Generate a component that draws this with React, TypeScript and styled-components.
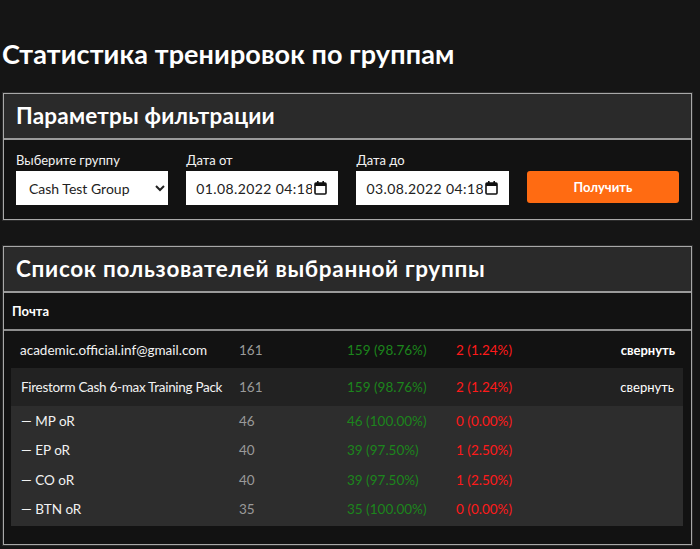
import React from 'react';
import styled, { createGlobalStyle } from 'styled-components';

const GlobalStyle = createGlobalStyle`
  html, body {
    margin: 0;
    padding: 0;
    background: #151515;
  }
  body {
    font-family: Lato, "Noto Sans", "Liberation Sans", sans-serif;
    color: #f2f2f2;
  }
  * { box-sizing: border-box; }
`;

const Page = styled.div`
  padding: 0 8px 0 2px;
`;

const Title = styled.h1`
  margin: 38px 0 24px;
  font-size: 27px;
  line-height: 31px;
  font-weight: 700;
  letter-spacing: 0.1px;
  color: #fff;
`;

const Card = styled.section`
  margin: 0 0 26px 1px;
  border: 1px solid #a8a8a8;
  box-shadow: 0 0 0 1px #2c2c2c;
  background: #121212;
`;

const CardHeader = styled.div`
  background: #2a2a2a;
  padding: 10px 12px;
  border-bottom: 2px solid #9a9a9a;
`;

const CardTitle = styled.h2<{ $wide?: boolean }>`
  margin: 0;
  font-size: 22.5px;
  line-height: 24px;
  font-weight: 700;
  letter-spacing: ${p => (p.$wide ? '0.7px' : '0.2px')};
  color: #fff;
`;

const FilterBody = styled.div`
  display: flex;
  align-items: flex-end;
  gap: 18px;
  padding: 12px 12px 14px;
`;

const Field = styled.label`
  display: flex;
  flex-direction: column;
  gap: 3px;
  width: 153px;
  font-size: 13px;
  line-height: 16px;
  color: #f2f2f2;
`;

const Select = styled.select`
  height: 34px;
  width: 100%;
  border: none;
  border-radius: 0;
  background: #fff;
  color: #222;
  font-family: inherit;
  font-size: 14px;
  padding: 0 6px 0 9px;
`;

const DateBox = styled.div`
  position: relative;
  height: 34px;
  background: #fff;
`;

const DateInput = styled.input`
  width: 100%;
  height: 100%;
  border: none;
  outline: none;
  background: transparent;
  color: #222;
  font-family: inherit;
  font-size: 14px;
  letter-spacing: 0.4px;
  padding: 0 26px 0 10px;
`;

const CalendarIcon = styled.svg`
  position: absolute;
  right: 11px;
  top: 10px;
  width: 13px;
  height: 14px;
  pointer-events: none;
`;

const SubmitButton = styled.button`
  width: 153px;
  height: 32px;
  margin-bottom: 2px;
  border: none;
  border-radius: 3px;
  background: #ff6b12;
  color: #fff;
  font-family: inherit;
  font-size: 13px;
  font-weight: 700;
  cursor: pointer;
`;

const TableHead = styled.div`
  padding: 0 8px;
  height: 38px;
  display: flex;
  align-items: center;
  font-size: 13px;
  font-weight: 700;
  color: #fff;
  border-bottom: 2px solid #8e8e8e;
`;

const UserRow = styled.div`
  display: grid;
  grid-template-columns: 219px 108px 109px 1fr auto;
  align-items: center;
  height: 37px;
  padding: 0 16px;
  font-size: 13.5px;
`;

const Nested = styled.div`
  margin: 0 8px 0 7px;
  background: #2d2d2d;
  padding-bottom: 2px;
`;

const PackRow = styled.div<{ $head?: boolean }>`
  display: grid;
  grid-template-columns: 218px 108px 109px 1fr auto;
  align-items: center;
  height: ${p => (p.$head ? '38px' : '29.5px')};
  padding: 0 9px 0 10px;
  font-size: 13.5px;
  background: ${p => (p.$head ? '#222' : 'transparent')};
`;

const Name = styled.span<{ $tight?: boolean }>`
  color: #f2f2f2;
  white-space: nowrap;
  letter-spacing: ${p => (p.$tight ? '-0.3px' : '0')};
`;

const Count = styled.span`
  color: #9a9a9a;
`;

const Ok = styled.span`
  color: #1c851c;
`;

const Bad = styled.span`
  color: #ff1a1a;
`;

const Toggle = styled.span<{ $bold?: boolean }>`
  color: #fff;
  font-size: 13px;
  font-weight: ${p => (p.$bold ? 700 : 400)};
  cursor: pointer;
`;

const Calendar = () => (
  <CalendarIcon viewBox="0 0 13 14">
    <rect x="1" y="2" width="11" height="11" rx="1" fill="none" stroke="#111" strokeWidth="1.6" />
    <rect x="1" y="2" width="11" height="3" fill="#111" />
    <rect x="3" y="0" width="1.6" height="3" fill="#111" />
    <rect x="8.4" y="0" width="1.6" height="3" fill="#111" />
  </CalendarIcon>
);

const positions = [
  { name: '— MP oR', total: 46, ok: '46 (100.00%)', bad: '0 (0.00%)' },
  { name: '— EP oR', total: 40, ok: '39 (97.50%)', bad: '1 (2.50%)' },
  { name: '— CO oR', total: 40, ok: '39 (97.50%)', bad: '1 (2.50%)' },
  { name: '— BTN oR', total: 35, ok: '35 (100.00%)', bad: '0 (0.00%)' },
];

export default function App() {
  return (
    <Page>
      <GlobalStyle />
      <Title>Статистика тренировок по группам</Title>

      <Card>
        <CardHeader>
          <CardTitle>Параметры фильтрации</CardTitle>
        </CardHeader>
        <FilterBody>
          <Field>
            Выберите группу
            <Select defaultValue="cash">
              <option value="cash">Cash Test Group</option>
            </Select>
          </Field>
          <Field>
            Дата от
            <DateBox>
              <DateInput readOnly value="01.08.2022 04:18" />
              <Calendar />
            </DateBox>
          </Field>
          <Field>
            Дата до
            <DateBox>
              <DateInput readOnly value="03.08.2022 04:18" />
              <Calendar />
            </DateBox>
          </Field>
          <SubmitButton>Получить</SubmitButton>
        </FilterBody>
      </Card>

      <Card>
        <CardHeader>
          <CardTitle $wide>Список пользователей выбранной группы</CardTitle>
        </CardHeader>
        <TableHead>Почта</TableHead>
        <UserRow>
          <Name>academic.official.inf@gmail.com</Name>
          <Count>161</Count>
          <Ok>159 (98.76%)</Ok>
          <Bad>2 (1.24%)</Bad>
          <Toggle $bold>свернуть</Toggle>
        </UserRow>
        <Nested>
          <PackRow $head>
            <Name $tight>Firestorm Cash 6-max Training Pack</Name>
            <Count>161</Count>
            <Ok>159 (98.76%)</Ok>
            <Bad>2 (1.24%)</Bad>
            <Toggle>свернуть</Toggle>
          </PackRow>
          {positions.map(p => (
            <PackRow key={p.name}>
              <Name>{p.name}</Name>
              <Count>{p.total}</Count>
              <Ok>{p.ok}</Ok>
              <Bad>{p.bad}</Bad>
              <span />
            </PackRow>
          ))}
        </Nested>
        <div style={{ height: 18 }} />
      </Card>
    </Page>
  );
}
